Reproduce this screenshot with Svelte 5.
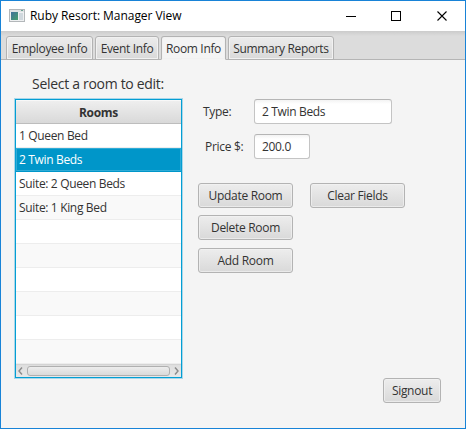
<script>
  const tabs = [
    { name: 'Employee Info', width: 87 },
    { name: 'Event Info', width: 64 },
    { name: 'Room Info', width: 65 },
    { name: 'Summary Reports', width: 106 }
  ];
  const rooms = ['1 Queen Bed', '2 Twin Beds', 'Suite: 2 Queen Beds', 'Suite: 1 King Bed', '', '', '', '', '', ''];
  let activeTab = $state(2);
  let selected = $state(1);
</script>

<div class="window">
  <header class="titlebar">
    <svg class="app" width="16" height="13" viewBox="0 0 16 13">
      <defs>
        <linearGradient id="pane" x1="0" y1="0" x2="1" y2="1">
          <stop offset="0" stop-color="#41709c" /><stop offset="1" stop-color="#459f6c" />
        </linearGradient>
      </defs>
      <rect x="0.5" y="0.5" width="15" height="12" fill="#eef0f1" stroke="#b3b7ba" />
      <rect x="1" y="1" width="14" height="2" fill="#dfe2e4" />
      <rect x="2" y="3" width="7" height="8" fill="url(#pane)" />
      <rect x="10" y="4" width="4" height="7" fill="#d0d8de" />
      <rect x="12" y="1" width="2" height="1" fill="#6e9f91" />
    </svg>
    <span class="title">Ruby Resort: Manager View</span>
    <svg class="controls" width="104" height="12" viewBox="0 0 104 12" fill="none" stroke="#000" shape-rendering="crispEdges">
      <path d="M0 6.500H10M45.500 1.500h9v9h-9z" />
      <path d="M91.500 1.500l9 9M100.500 1.500l-9 9" shape-rendering="auto" stroke-width="1.1" />
    </svg>
  </header>

  <nav class="tabs">
    {#each tabs as tab, i}
      <button class="tab" class:active={i === activeTab} style:width="{tab.width}px" onclick={() => (activeTab = i)}>{tab.name}</button>
    {/each}
  </nav>

  <main>
    <section class="left">
      <div class="prompt">Select a room to edit:</div>
      <div class="table">
        <div class="head">Rooms</div>
        {#each rooms as room, i}
          <div class="row" class:selected={i === selected}>{room}</div>
        {/each}
        <div class="scroll">
          <svg width="5" height="8" viewBox="0 0 5 8" fill="none" stroke="#8b8b8b" stroke-width="1.4"><path d="M4 .5L1 4l3 3.500" /></svg>
          <div class="thumb"></div>
          <svg width="5" height="8" viewBox="0 0 5 8" fill="none" stroke="#8b8b8b" stroke-width="1.4"><path d="M1 .5L4 4 1 7.500" /></svg>
        </div>
      </div>
    </section>
    <section class="right">
      <div class="field"><span class="type">Type:</span><div class="input wide">2 Twin Beds</div></div>
      <div class="field second"><span class="price">Price $:</span><div class="input">200.0</div></div>
      <div class="actions">
        <div class="stack">
          <button class="btn update">Update Room</button>
          <button class="btn delete">Delete Room</button>
          <button class="btn">Add Room</button>
        </div>
        <button class="btn">Clear Fields</button>
      </div>
      <button class="btn signout">Signout</button>
    </section>
  </main>
</div>

<style>
  :global(body) { margin: 0; }
  .window {
    box-sizing: border-box;
    width: 466px;
    height: 429px;
    border: 1px solid #1883d7;
    background: #f4f4f4;
    color: #333;
    font: 12px 'Open Sans', 'Noto Sans', sans-serif;
    letter-spacing: -0.3px;
    white-space: nowrap;
    overflow: hidden;
  }
  .window * { box-sizing: border-box; }
  button { font: inherit; letter-spacing: inherit; color: inherit; padding: 0; margin: 0; }
  .titlebar { display: flex; align-items: center; height: 30px; background: #fff; padding-left: 8px; color: #000; }
  .app { margin-top: -1px; }
  .title { margin-left: 5px; line-height: 30px; letter-spacing: -0.05px; }
  .controls { margin: 0 15px 0 auto; }
  .tabs {
    display: flex;
    align-items: flex-end;
    gap: 2px;
    height: 29px;
    padding: 5px 5px 0;
    background: linear-gradient(#cbcbcb, #dcdcdc 5px, #dcdcdc);
    box-shadow: inset 0 -1px #b5b5b5;
  }
  .tab {
    height: 24px;
    border: 1px solid #b3b3b3;
    border-radius: 3px 3px 0 0;
    background: linear-gradient(#ececec, #d9d9d9);
    box-shadow: inset 0 0 0 1px #f1f1f1;
    line-height: 24px;
    letter-spacing: -0.34px;
  }
  .tab.active { border-bottom-color: #f4f4f4; background: #f4f4f4; }
  main { display: flex; }
  .left { width: 182px; padding-left: 14px; }
  .prompt { height: 39px; padding: 12px 0 0 17px; font-size: 14px; line-height: 24px; }
  .table {
    width: 167px;
    height: 279px;
    border: 1px solid #039ed3;
    box-shadow: 0 0 0 1px #a9d7ea;
    background: #fff;
  }
  .head {
    height: 24px;
    border-bottom: 1px solid #bdbdbd;
    background: linear-gradient(#efefef, #d9d9d9);
    box-shadow: inset 0 1px #f8f8f8;
    text-align: center;
    font-weight: 700;
    line-height: 26px;
  }
  .row { height: 24px; padding-left: 3px; border-bottom: 1px solid #ededed; line-height: 24px; letter-spacing: -0.34px; }
  .row:nth-child(odd) { background: #f9f9f9; }
  .row.selected { background: #0096c9; border-color: #0096c9; color: #fff; box-shadow: inset 0 0 0 1px #30abd6; }
  .scroll {
    display: flex;
    align-items: center;
    justify-content: space-between;
    height: 13px;
    padding: 0 2px;
    border-top: 1px solid #d4d4d4;
    background: linear-gradient(#dedede, #e8e8e8);
  }
  .thumb { width: 143px; height: 10px; border: 1px solid #b0b0b0; border-radius: 3px; background: linear-gradient(#ededed, #dadada); }
  .right { display: flex; flex-direction: column; flex: 1; padding: 39px 24px 0 15px; }
  .field { display: flex; height: 25px; line-height: 26px; }
  .second { margin-top: 10px; }
  .type, .price { width: 56px; padding-left: 5px; }
  .price { padding-left: 7px; }
  .input {
    width: 56px;
    height: 25px;
    padding-left: 7px;
    border: 1px solid #c4c4c4;
    border-top-color: #b5b5b5;
    border-radius: 3px;
    background: linear-gradient(#f3f3f3, #fff 4px);
    line-height: 24px;
    letter-spacing: -0.34px;
  }
  .wide { width: 138px; }
  .actions { display: flex; gap: 17px; margin-top: 24px; }
  .stack { display: flex; flex-direction: column; }
  .btn {
    width: 95px;
    height: 25px;
    border: 1px solid #b3b3b3;
    border-radius: 3px;
    background: linear-gradient(#ededed, #d9d9d9);
    box-shadow: inset 0 0 0 1px #f3f3f3aa;
    line-height: 24px;
  }
  .update { margin-bottom: 7px; }
  .delete { margin-bottom: 8px; }
  .signout { width: 58px; margin: 105px 0 0 auto; }
</style>
